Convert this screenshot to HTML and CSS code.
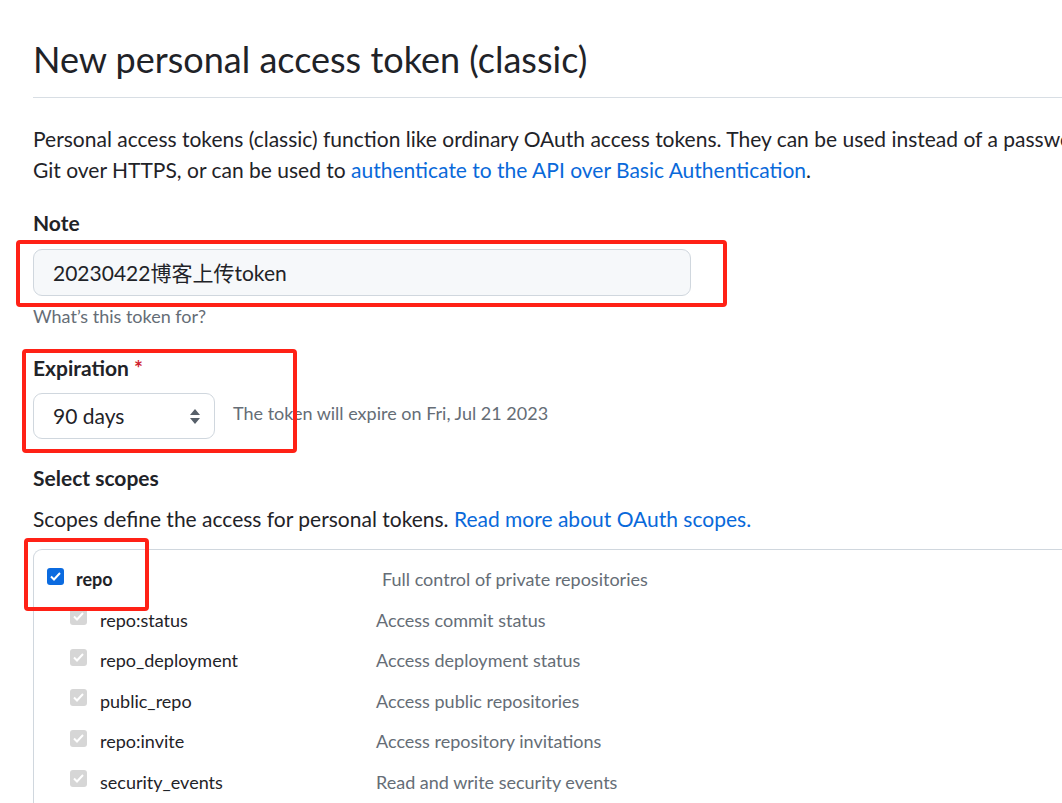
FILE: index.html
```html
<!DOCTYPE html>
<html>
<head>
<meta charset="utf-8">
<link rel="stylesheet" href="styles.css">
</head>
<body>
<div class="page">
  <h2 class="title">New personal access token (classic)</h2>
  <p class="intro"><span class="nowrap">Personal access tokens (classic) function like ordinary OAuth access tokens. They can be used instead of a password for</span><br>Git over HTTPS, or can be used to <a class="link">authenticate to the API over Basic Authentication</a>.</p>

  <div class="field">
    <div class="label">Note</div>
    <div class="input">20230422博客上传token</div>
    <div class="hint">What’s this token for?</div>
  </div>

  <div class="field">
    <div class="label">Expiration <span class="req">*</span></div>
    <div class="exp-row">
      <div class="select">90 days
        <svg class="arrows" width="12" height="17" viewBox="0 0 12 17"><path d="M6 1 L11 7 H1 Z M6 16 L11 10 H1 Z" fill="#57606a"/></svg>
      </div>
      <div class="exp-note">The token will expire on Fri, Jul 21 2023</div>
    </div>
  </div>

  <div class="field scopes">
    <div class="label">Select scopes</div>
    <p class="scope-desc">Scopes define the access for personal tokens. <a class="link">Read more about OAuth scopes.</a></p>
    <div class="scope-box">
      <div class="row parent">
        <span class="cb checked"><svg width="11" height="9" viewBox="0 0 11 9"><path d="M1 4.5 L4 7.5 L10 1" fill="none" stroke="#fff" stroke-width="2"/></svg></span>
        <span class="name">repo</span>
        <span class="desc">Full control of private repositories</span>
      </div>
      <div class="row child">
        <span class="cb disabled"><svg width="11" height="9" viewBox="0 0 11 9"><path d="M1 4.5 L4 7.5 L10 1" fill="none" stroke="#fff" stroke-width="2"/></svg></span>
        <span class="name">repo:status</span>
        <span class="desc">Access commit status</span>
      </div>
      <div class="row child">
        <span class="cb disabled"><svg width="11" height="9" viewBox="0 0 11 9"><path d="M1 4.5 L4 7.5 L10 1" fill="none" stroke="#fff" stroke-width="2"/></svg></span>
        <span class="name">repo_deployment</span>
        <span class="desc">Access deployment status</span>
      </div>
      <div class="row child">
        <span class="cb disabled"><svg width="11" height="9" viewBox="0 0 11 9"><path d="M1 4.5 L4 7.5 L10 1" fill="none" stroke="#fff" stroke-width="2"/></svg></span>
        <span class="name">public_repo</span>
        <span class="desc">Access public repositories</span>
      </div>
      <div class="row child">
        <span class="cb disabled"><svg width="11" height="9" viewBox="0 0 11 9"><path d="M1 4.5 L4 7.5 L10 1" fill="none" stroke="#fff" stroke-width="2"/></svg></span>
        <span class="name">repo:invite</span>
        <span class="desc">Access repository invitations</span>
      </div>
      <div class="row child">
        <span class="cb disabled"><svg width="11" height="9" viewBox="0 0 11 9"><path d="M1 4.5 L4 7.5 L10 1" fill="none" stroke="#fff" stroke-width="2"/></svg></span>
        <span class="name">security_events</span>
        <span class="desc">Read and write security events</span>
      </div>
    </div>
  </div>

  <div class="mark mark-note"></div>
  <div class="mark mark-exp"></div>
  <div class="mark mark-repo"></div>
</div>
</body>
</html>
```

FILE: styles.css
```css
html, body {
  margin: 0;
  padding: 0;
  background: #fff;
  overflow: hidden;
}
body {
  font-family: "Lato", "Noto Sans CJK SC", sans-serif;
  color: #1f2328;
  font-size: 21px;
  line-height: 31px;
}
.page {
  position: relative;
  width: 1140px;
  padding-left: 33px;
  padding-top: 32px;
}
.title {
  margin: 0;
  font-size: 36px;
  font-weight: 400;
  line-height: 54px;
  padding-bottom: 11px;
  border-bottom: 1px solid #d8dee4;
}
.intro {
  margin: 25px 0 0;
}
.nowrap { white-space: nowrap; }
.link { color: #0969da; text-decoration: none; }
.field { margin-top: 22px; }
.label {
  font-weight: 700;
  font-size: 21px;
  line-height: 31px;
}
.req { color: #cf222e; }
.input {
  margin-top: 11px;
  width: 618px;
  height: 45px;
  padding: 0 19px;
  box-sizing: content-box;
  border: 1px solid #d0d7de;
  border-radius: 9px;
  background: #f6f8fa;
  line-height: 45px;
  font-size: 21px;
}
.hint {
  margin-top: 7px;
  font-size: 18px;
  line-height: 27px;
  color: #656d76;
}
.field + .field { margin-top: 22px; }
.exp-row {
  margin-top: 10px;
  display: flex;
  align-items: center;
  gap: 18px;
}
.select {
  position: relative;
  width: 148px;
  height: 44px;
  padding: 0 13px 0 19px;
  border: 1px solid #d0d7de;
  border-radius: 9px;
  line-height: 44px;
  font-size: 21px;
  display: flex;
  align-items: center;
  justify-content: space-between;
}
.arrows { flex: none; }
.exp-note {
  font-size: 18px;
  color: #656d76;
  margin-top: -6px;
}
.field.scopes { margin-top: 23px; }
.scope-desc { margin: 10px 0 0; }
.scope-box {
  margin-top: 15px;
  border: 1px solid #d0d7de;
  border-right: none;
  border-bottom: none;
  border-radius: 9px 0 0 0;
  padding-top: 9.5px;
  font-size: 18px;
}
.row {
  display: flex;
  align-items: center;
  height: 40.5px;
}
.cb {
  flex: none;
  width: 17px;
  height: 17px;
  border-radius: 3px;
  display: flex;
  align-items: center;
  justify-content: center;
}
.cb.checked { background: #0b6be0; }
.cb.disabled { background: #d6d6d6; }
.parent .cb { margin-left: 13px; margin-top: -7px; }
.parent .name { margin-left: 12px; width: 306px; font-weight: 700; }
.child .cb { margin-left: 36px; margin-top: -7px; }
.child .name { margin-left: 13px; width: 276px; }
.desc { color: #656d76; }
.mark {
  position: absolute;
  border: 4px solid #ff2116;
  border-radius: 4px;
  box-sizing: border-box;
}
.mark-note { left: 16px; top: 240px; width: 711px; height: 67px; }
.mark-exp { left: 22px; top: 349px; width: 275px; height: 104px; }
.mark-repo { left: 24px; top: 538px; width: 125px; height: 73px; }
```
